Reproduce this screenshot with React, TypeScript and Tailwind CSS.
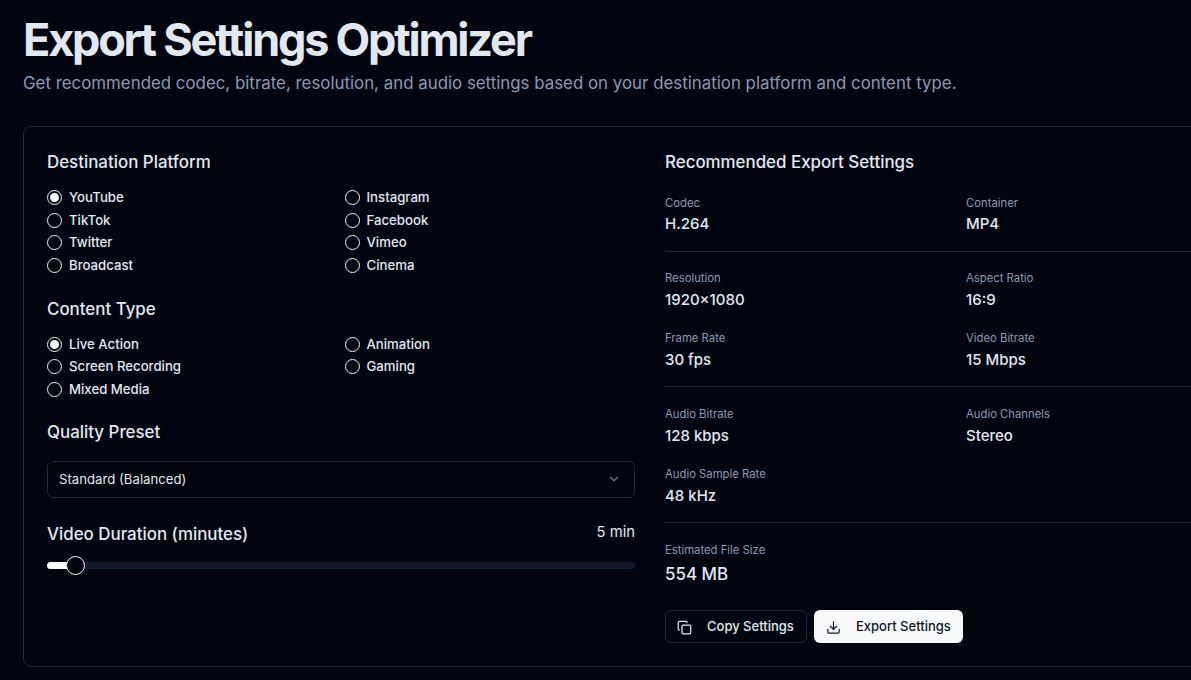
import { ChevronDown, Copy, Download } from "lucide-react";

function RadioGroup({ options, selected }: { options: string[]; selected: string }) {
  return (
    <div className="grid grid-cols-2 gap-x-[7px] mt-[12.5px]">
      {options.map((option) => (
        <div key={option} className="flex h-[22.5px] items-center gap-[7px]">
          <span className="flex h-[15px] w-[15px] shrink-0 items-center justify-center rounded-full border border-[#f1f5f9]">
            {option === selected ? <span className="h-[9px] w-[9px] rounded-full bg-[#f8fafc]" /> : null}
          </span>
          <span className="text-[13.2px] font-medium leading-none text-[#e2e8f0]">{option}</span>
        </div>
      ))}
    </div>
  );
}

function Stat({ label, value, tight }: { label: string; value: string; tight?: boolean }) {
  return (
    <div>
      <p className="text-[11.3px] leading-4 text-[#8a9ab3]">{label}</p>
      <p className={tight ? "mt-[2px] text-[15px] font-[550] leading-[22px] text-[#e2e8f0]" : "mt-[3px] text-[15px] font-[550] leading-[22px] text-[#e2e8f0]"}>
        {value}
      </p>
    </div>
  );
}

export default function App() {
  return (
    <div className="h-[680px] w-[1191px] overflow-hidden bg-[#020510] font-['Inter',sans-serif]">
      <div className="w-[1300px] px-[23px]">
        <h1 className="pt-3 text-[45px] font-bold leading-[56px] tracking-[-0.049em] text-[#e2e8f0]">
          Export Settings Optimizer
        </h1>
        <p className="mt-[3px] text-[16.87px] leading-6 text-[#8a9ab3]">
          Get recommended codec, bitrate, resolution, and audio settings based on your destination platform and content type.
        </p>

        <div className="mt-[31px] grid h-[541px] w-[1254px] grid-cols-[588px_588px] gap-[30px] rounded-lg border border-[#1e293b] p-[23px]">
          <div>
            <h2 className="text-[16.9px] font-medium leading-6 text-[#e2e8f0]">Destination Platform</h2>
            <RadioGroup
              selected="YouTube"
              options={["YouTube", "Instagram", "TikTok", "Facebook", "Twitter", "Vimeo", "Broadcast", "Cinema"]}
            />
            <h2 className="mt-[20px] text-[16.9px] font-medium leading-6 text-[#e2e8f0]">Content Type</h2>
            <RadioGroup
              selected="Live Action"
              options={["Live Action", "Animation", "Screen Recording", "Gaming", "Mixed Media"]}
            />
            <h2 className="mt-[19px] text-[16.9px] font-medium leading-6 text-[#e2e8f0]">Quality Preset</h2>
            <div className="mt-[17px] flex h-[37px] items-center justify-between rounded-md border border-[#1e293b] pl-[11px] pr-[13px]">
              <span className="pt-px text-[13.2px] text-[#e2e8f0]">Standard (Balanced)</span>
              <ChevronDown className="h-[14px] w-[14px] text-[#e2e8f0] opacity-50" />
            </div>
            <div className="mt-[24px] flex items-start justify-between">
              <h2 className="text-[16.9px] font-medium leading-6 text-[#e2e8f0]">Video Duration (minutes)</h2>
              <span className="text-[14.8px] leading-5 text-[#e2e8f0]">5 min</span>
            </div>
            <div className="relative mt-[16px] h-[7px] rounded-full bg-[#111a2c]">
              <div className="h-[7px] w-7 rounded-full bg-[#f8fafc]" />
              <span className="absolute left-[19px] top-[-6px] h-[19px] w-[19px] rounded-full border border-[#f1f5f9] bg-[#020510]" />
            </div>
          </div>

          <div>
            <h2 className="text-[16.9px] font-medium leading-6 text-[#e2e8f0]">Recommended Export Settings</h2>
            <div className="mt-[21px] grid grid-cols-2 gap-x-[14px]">
              <Stat label="Codec" value="H.264" tight />
              <Stat label="Container" value="MP4" tight />
            </div>
            <div className="mb-[18px] mt-[16px] h-px bg-[#1e293b]" />
            <div className="grid grid-cols-2 gap-x-[14px] gap-y-[19px]">
              <Stat label="Resolution" value="1920×1080" />
              <Stat label="Aspect Ratio" value="16:9" />
              <Stat label="Frame Rate" value="30 fps" />
              <Stat label="Video Bitrate" value="15 Mbps" />
            </div>
            <div className="mb-[19px] mt-[15px] h-px bg-[#1e293b]" />
            <div className="grid grid-cols-2 gap-x-[14px] gap-y-[19px]">
              <Stat label="Audio Bitrate" value="128 kbps" />
              <Stat label="Audio Channels" value="Stereo" />
              <Stat label="Audio Sample Rate" value="48 kHz" />
            </div>
            <div className="mb-[19px] mt-[15px] h-px bg-[#1e293b]" />
            <div>
              <p className="text-[11.3px] leading-4 text-[#8a9ab3]">Estimated File Size</p>
              <p className="mt-[2px] text-[16.9px] font-[550] leading-7 text-[#e2e8f0]">554 MB</p>
            </div>
            <div className="mt-[22px] flex gap-[7px]">
              <button className="flex h-[33px] w-[142px] items-center gap-[15px] rounded-md border border-[#1e293b] pl-[11px] pt-px text-[13px] font-medium text-[#e2e8f0]">
                <Copy className="h-[15px] w-[15px]" />
                Copy Settings
              </button>
              <button className="flex h-[33px] w-[149px] items-center gap-[15px] rounded-md bg-[#f8fafc] pl-[12px] pt-px text-[13px] font-medium text-[#0f172a]">
                <Download className="h-[15px] w-[15px]" />
                Export Settings
              </button>
            </div>
          </div>
        </div>
      </div>
    </div>
  );
}
